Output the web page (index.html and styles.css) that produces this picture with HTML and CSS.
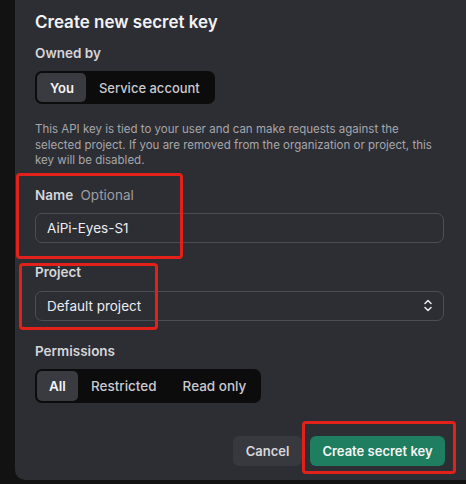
FILE: index.html
```html
<!DOCTYPE html>
<html>
<head>
<meta charset="utf-8">
<link rel="stylesheet" href="styles.css">
</head>
<body>
<div class="page">
  <div class="dialog">
    <h1 class="title">Create new secret key</h1>
    <div class="label owned">Owned by</div>
    <div class="segment seg-owner">
      <span class="seg-btn active">You</span>
      <span class="seg-btn">Service account</span>
    </div>
    <p class="desc">This API key is tied to your user and can make requests against the selected project. If you are removed from the organization or project, this key will be disabled.</p>
    <div class="label name-label">Name <span class="optional">Optional</span></div>
    <div class="field">AiPi-Eyes-S1</div>
    <div class="label project-label">Project</div>
    <div class="field select">
      <span>Default project</span>
      <svg class="chev" width="10" height="13" viewBox="0 0 10 13" fill="none" stroke="#e6e6ea" stroke-width="1.6" stroke-linecap="round" stroke-linejoin="round"><path d="M2 4.5 L5 1.5 L8 4.5"/><path d="M2 8.5 L5 11.5 L8 8.5"/></svg>
    </div>
    <div class="label perm-label">Permissions</div>
    <div class="segment seg-perm">
      <span class="seg-btn active">All</span>
      <span class="seg-btn">Restricted</span>
      <span class="seg-btn">Read only</span>
    </div>
    <div class="actions">
      <button class="btn cancel">Cancel</button>
      <button class="btn primary">Create secret key</button>
    </div>
  </div>
  <div class="mark mark-name"></div>
  <div class="mark mark-project"></div>
  <div class="mark mark-create"></div>
</div>
</body>
</html>
```
FILE: styles.css
```css
html, body {
  margin: 0;
  padding: 0;
  background: #121213;
}
body {
  width: 466px;
  height: 484px;
  overflow: hidden;
  font-family: Inter, "Noto Sans", "Liberation Sans", sans-serif;
}
.page {
  position: relative;
  width: 466px;
  height: 484px;
}
.dialog {
  margin-left: 15px;
  width: 451px;
  height: 480px;
  box-sizing: border-box;
  background: #2d2e33;
  border-bottom-left-radius: 10px;
  padding: 10px 22px 0 20px;
  color: #ececf1;
  display: flex;
  flex-direction: column;
  align-items: flex-start;
}
.title {
  margin: 0;
  font-size: 17px;
  line-height: 24px;
  font-weight: 600;
  color: #f2f2f4;
}
.label {
  font-size: 13.5px;
  line-height: 18px;
  font-weight: 600;
  color: #d6d6da;
}
.owned { margin-top: 10px; }
.segment {
  display: flex;
  background: #0c0c0d;
  border-radius: 7px;
  padding: 2px;
  box-sizing: border-box;
}
.seg-owner { margin-top: 9px; height: 33px; }
.seg-perm { margin-top: 9px; height: 34px; }
.seg-btn {
  display: flex;
  align-items: center;
  font-size: 13px;
  font-weight: 500;
  color: #c9c9ce;
  border-radius: 5px;
}
.seg-btn.active {
  background: #3a3b41;
  color: #f4f4f6;
  font-weight: 600;
}
.seg-owner .seg-btn { padding: 0 13px; }
.seg-owner .seg-btn.active { padding: 0 12px 0 13px; }
.seg-perm .seg-btn { padding: 0 13px; font-size: 13.5px; }
.seg-perm .seg-btn.active { padding: 0 12px; }
.desc {
  margin: 18px 0 0;
  font-size: 11.5px;
  line-height: 15.5px;
  color: #a6a6ac;
}
.name-label { margin-top: 17px; }
.optional {
  font-weight: 400;
  color: #9d9da3;
  margin-left: 4px;
}
.field {
  margin-top: 9px;
  align-self: stretch;
  height: 30px;
  box-sizing: border-box;
  border: 1px solid #4d4e55;
  border-radius: 7px;
  padding: 0 11px;
  display: flex;
  align-items: center;
  font-size: 13.5px;
  color: #ececf1;
}
.select {
  justify-content: space-between;
  margin-top: 10px;
}
.chev { margin-right: -1px; }
.project-label { margin-top: 20px; }
.perm-label { margin-top: 21px; }
.actions {
  margin-top: 33px;
  align-self: stretch;
  display: flex;
  justify-content: flex-end;
  gap: 8px;
  margin-right: -1px;
}
.btn {
  height: 30px;
  border: none;
  border-radius: 6px;
  font-family: inherit;
  font-size: 13px;
  font-weight: 600;
  padding: 0 12px;
}
.cancel {
  background: #38393f;
  color: #d8d8dc;
  width: 69px;
}
.primary {
  background: #1f7d60;
  color: #f4f6f5;
  width: 135px;
}
.mark {
  position: absolute;
  border: 3px solid #e3211b;
  border-radius: 4px;
  box-sizing: border-box;
}
.mark-name { left: 16px; top: 173px; width: 167px; height: 86px; }
.mark-project { left: 19px; top: 263px; width: 139px; height: 67px; }
.mark-create { left: 302px; top: 421px; width: 154px; height: 53px; }
```
